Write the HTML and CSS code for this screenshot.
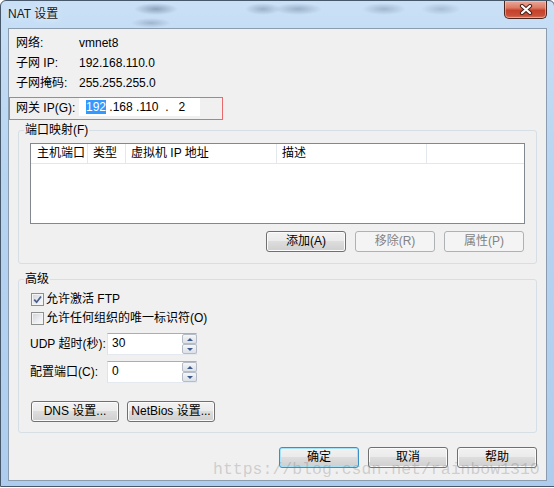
FILE: index.html
```html
<!DOCTYPE html>
<html lang="zh-CN">
<head>
<meta charset="utf-8">
<title>NAT 设置</title>
<link rel="stylesheet" href="styles.css">
</head>
<body>
<div class="window">
  <div class="titlebar">
    <span class="title">NAT 设置</span>
    <div class="close" aria-label="关闭">
      <svg width="14" height="11" viewBox="0 0 14 11"><path d="M3 2 L11 9 M11 2 L3 9" stroke="#4a2018" stroke-width="4.2" stroke-linecap="round"/><path d="M3 2 L11 9 M11 2 L3 9" stroke="#ffffff" stroke-width="2.2" stroke-linecap="round"/></svg>
    </div>
  </div>
  <div class="client">
    <div class="info">
      <span>网络:</span><span>vmnet8</span>
      <span>子网 IP:</span><span>192.168.110.0</span>
      <span>子网掩码:</span><span>255.255.255.0</span>
    </div>
    <div class="gateway">
      <span class="gw-label">网关 IP(G):</span>
      <div class="ipbox"><span class="sel">192</span><span> .168 .110  .   2</span></div>
    </div>
    <fieldset class="group group-port">
      <legend>端口映射(F)</legend>
      <div class="listview">
        <div class="lv-head">
          <div class="lv-col lv-first">主机端口</div>
          <div class="lv-col">类型</div>
          <div class="lv-col">虚拟机 IP 地址</div>
          <div class="lv-col">描述</div>
          <div class="lv-col lv-fill"></div>
        </div>
      </div>
      <div class="btn-row">
        <button class="btn">添加(A)</button>
        <button class="btn" disabled>移除(R)</button>
        <button class="btn" disabled>属性(P)</button>
      </div>
    </fieldset>
    <fieldset class="group group-adv">
      <legend>高级</legend>
      <label class="check"><span class="box"><svg width="11" height="11" viewBox="0 0 11 11"><path d="M2.2 5.6 L4.6 8.2 L9 2.4" fill="none" stroke="#4b5e92" stroke-width="1.7"/></svg></span>允许激活 FTP</label>
      <label class="check"><span class="box"></span>允许任何组织的唯一标识符(O)</label>
      <div class="field">
        <span class="f-label">UDP 超时(秒):</span>
        <div class="spin"><span class="spin-val">30</span><div class="spin-btns"><span class="spin-btn"><i class="tri-up"></i></span><span class="spin-btn"><i class="tri-down"></i></span></div></div>
      </div>
      <div class="field field-port">
        <span class="f-label">配置端口(C):</span>
        <div class="spin"><span class="spin-val">0</span><div class="spin-btns"><span class="spin-btn"><i class="tri-up"></i></span><span class="spin-btn"><i class="tri-down"></i></span></div></div>
      </div>
      <div class="adv-btns">
        <button class="btn btn-wide">DNS 设置...</button>
        <button class="btn btn-wide">NetBios 设置...</button>
      </div>
    </fieldset>
    <div class="dialog-btns">
      <button class="btn btn-default">确定</button>
      <button class="btn">取消</button>
      <button class="btn">帮助</button>
    </div>
  </div>
</div>
<div class="watermark">https://blog.csdn.net/rainbow1310</div>
</body>
</html>
```

FILE: styles.css
```css
* { box-sizing: border-box; }
html, body { margin: 0; }
body {
  position: relative;
  width: 554px;
  height: 488px;
  overflow: hidden;
  background: #ffffff;
  font: 12px/1.2 "Liberation Sans", "Noto Sans CJK SC", sans-serif;
  color: #000;
}
.window {
  width: 555px;
  height: 487px;
  border: 1px solid #46586a;
  border-radius: 6px 6px 0 0;
  padding: 0 7px 5px;
  display: flex;
  flex-direction: column;
  background:
    radial-gradient(ellipse 22px 6px at 155px 8px, rgba(70,90,120,0.45), rgba(70,90,120,0) 100%),
    radial-gradient(ellipse 20px 5px at 150px 22px, rgba(70,90,120,0.3), rgba(70,90,120,0) 100%),
    radial-gradient(ellipse 18px 6px at 262px 8px, rgba(70,90,120,0.35), rgba(70,90,120,0) 100%),
    radial-gradient(ellipse 24px 6px at 297px 8px, rgba(70,90,120,0.35), rgba(70,90,120,0) 100%),
    radial-gradient(ellipse 22px 6px at 383px 8px, rgba(70,90,120,0.3), rgba(70,90,120,0) 100%),
    radial-gradient(ellipse 20px 6px at 440px 8px, rgba(70,90,120,0.25), rgba(70,90,120,0) 100%),
    linear-gradient(180deg, #c9e0f6 0%, #b7d4f1 35%, #aecdee 100%);
}
.titlebar {
  height: 27px;
  display: flex;
  justify-content: space-between;
  align-items: flex-start;
}
.title {
  padding-top: 5px;
  line-height: 16px;
  color: #1a1a1a;
  text-shadow: 0 0 6px rgba(255,255,255,0.9);
}
.close {
  width: 43px;
  height: 18px;
  border: 1px solid #4b2620;
  border-top: 0;
  border-radius: 0 0 5px 5px;
  background: linear-gradient(180deg, #e9a99a 0%, #dc7a64 40%, #c6412a 55%, #c8503a 85%, #d77a5c 100%);
  box-shadow: inset 0 0 0 1px rgba(255,210,200,0.5);
  display: flex;
  align-items: center;
  justify-content: center;
}
.client {
  flex: 1;
  background: #f0f0f0;
  border: 1px solid #8b9cae;
  display: flex;
  flex-direction: column;
}
.info {
  display: grid;
  grid-template-columns: 63px auto;
  grid-auto-rows: 20px;
  align-items: center;
  padding: 4px 0 0 7px;
}
.gateway {
  margin-top: 4px;
  width: 214px;
  height: 23px;
  border: 1px solid #e86a6c;
  display: flex;
  align-items: flex-start;
  padding-left: 6px;
}
.gw-label {
  width: 63px;
  line-height: 20px;
}
.ipbox {
  width: 121px;
  height: 18px;
  background: #fff;
  padding-left: 7px;
  line-height: 18px;
  white-space: pre;
}
.sel {
  background: #3399ff;
  color: #fff;
}
.group {
  margin: 0 9px;
  border: 1px solid #d5dfe5;
  border-radius: 3px;
  min-width: 0;
}
.group legend {
  margin-left: -6px;
  padding: 0 1px;
  line-height: 18px;
}
.group-port {
  margin-top: 1px;
  padding: 4px 11px 11px;
}
.listview {
  height: 81px;
  border: 1px solid #828790;
  background: #fff;
}
.lv-head {
  display: grid;
  grid-template-columns: 57px 38px 151px 150px 1fr;
  height: 20px;
  border-bottom: 1px solid #e3e6ea;
}
.lv-col {
  padding-left: 5px;
  line-height: 19px;
  border-right: 1px solid #e3e8ee;
}
.lv-first { padding-left: 6px; }
.lv-fill { border-right: 0; }
.btn-row {
  display: flex;
  justify-content: flex-end;
  gap: 9px;
  margin-top: 7px;
  padding-right: 1px;
}
.btn {
  font: inherit;
  width: 80px;
  height: 21px;
  padding: 0;
  border: 1px solid #707070;
  border-radius: 3px;
  background: linear-gradient(180deg, #f2f2f2 0%, #ebebeb 45%, #dddddd 50%, #cfcfcf 100%);
  box-shadow: inset 0 0 0 1px #fbfbfb;
  color: #000;
  line-height: 19px;
}
.btn:disabled {
  border-color: #adb2b5;
  background: #f4f4f4;
  box-shadow: none;
  color: #838383;
}
.btn-default {
  border-color: #3c8fc4;
  box-shadow: inset 0 0 0 1px #a5e2f8;
}
.btn-wide { width: 88px; }
.group-adv {
  margin-top: 6px;
  padding: 2px 11px 10px;
}
.check {
  display: flex;
  align-items: center;
  height: 19px;
}
.box {
  width: 13px;
  height: 13px;
  margin: 0 2px 0 1px;
  border: 1px solid #8e8f8f;
  background: linear-gradient(135deg, #cfd3d8 0%, #eceef0 60%, #fafafa 100%);
  box-shadow: inset 0 0 0 1px #f4f4f4;
  display: flex;
  align-items: center;
  justify-content: center;
}
.field {
  display: flex;
  align-items: center;
  margin-top: 5px;
  height: 22px;
}
.field-port { margin-top: 6px; }
.f-label { width: 77px; }
.spin {
  width: 90px;
  height: 22px;
  border: 1px solid #abadb3;
  border-color: #abadb3 #dbdfe6 #e3e9ef #e2e3ea;
  background: #fff;
  display: flex;
  justify-content: space-between;
}
.spin-val {
  padding: 1px 0 0 4px;
  line-height: 16px;
}
.spin-btns {
  width: 15px;
  display: flex;
  flex-direction: column;
  margin: 0 -1px 0 0;
}
.spin-btn {
  flex: 1;
  border: 1px solid #b6bcc6;
  border-radius: 2px;
  background: linear-gradient(180deg, #f6f7f9 0%, #e7eaee 50%, #dde1e6 100%);
  display: flex;
  align-items: center;
  justify-content: center;
}
.tri-up, .tri-down {
  width: 0;
  height: 0;
  border-left: 3px solid transparent;
  border-right: 3px solid transparent;
}
.tri-up { border-bottom: 3px solid #3c5a8e; }
.tri-down { border-top: 3px solid #3c5a8e; }
.adv-btns {
  display: flex;
  gap: 8px;
  margin-top: 18px;
  padding-left: 1px;
}
.dialog-btns {
  display: flex;
  justify-content: flex-end;
  gap: 9px;
  margin: 14px 9px 0 0;
}
.watermark {
  position: absolute;
  left: 213px;
  top: 461px;
  font: 16.5px/17px "Liberation Mono", monospace;
  color: rgba(120, 120, 120, 0.3);
  white-space: nowrap;
  pointer-events: none;
}
```
